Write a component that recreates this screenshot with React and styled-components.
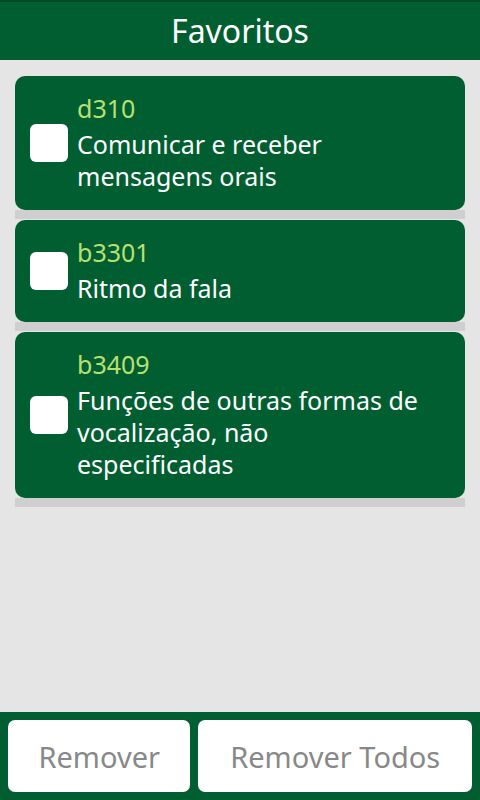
import styled, { createGlobalStyle } from "styled-components";

const GlobalStyle = createGlobalStyle`
  html, body {
    margin: 0;
    padding: 0;
    height: 100%;
    background: #e5e5e5;
    font-family: "Noto Sans", "Open Sans", sans-serif;
  }
  #root {
    height: 100%;
  }
  * {
    box-sizing: border-box;
  }
`;

const favorites = [
  { code: "d310", title: "Comunicar e receber mensagens orais" },
  { code: "b3301", title: "Ritmo da fala" },
  {
    code: "b3409",
    title: "Funções de outras formas de vocalização, não especificadas",
  },
];

export default function App() {
  return (
    <>
      <GlobalStyle />
      <Screen>
        <Header>Favoritos</Header>
        <List>
          {favorites.map((f) => (
            <Item key={f.code}>
              <Card>
                <Check />
                <Texts>
                  <Code>{f.code}</Code>
                  <Title>{f.title}</Title>
                </Texts>
              </Card>
              <Shadow />
            </Item>
          ))}
        </List>
        <Footer>
          <Button grow={2}>Remover</Button>
          <Button grow={3}>Remover Todos</Button>
        </Footer>
      </Screen>
    </>
  );
}

const Screen = styled.div`
  height: 800px;
  display: flex;
  flex-direction: column;
  background: #e5e5e5;
`;

const Header = styled.header`
  height: 60px;
  background: #005e30;
  border-top: 2px solid #004a25;
  color: #ffffff;
  font-size: 32px;
  display: flex;
  align-items: center;
  justify-content: center;
  padding-bottom: 2px;
`;

const List = styled.main`
  flex: 1;
  padding: 16px 15px 0;
  display: flex;
  flex-direction: column;
  gap: 1px;
`;

const Item = styled.div`
  display: flex;
  flex-direction: column;
`;

const Card = styled.div`
  background: #005e30;
  border-radius: 10px;
  padding: 17px 40px 18px 15px;
  display: flex;
  align-items: center;
  gap: 9px;
`;

const Shadow = styled.div`
  height: 9px;
  background: #cfcfcf;
`;

const Check = styled.div`
  width: 38px;
  height: 38px;
  flex-shrink: 0;
  background: #ffffff;
  border-radius: 6px;
`;

const Texts = styled.div`
  display: flex;
  flex-direction: column;
  font-size: 25px;
`;

const Code = styled.span`
  color: #b8e070;
  line-height: 30px;
  margin-bottom: 5px;
`;

const Title = styled.span`
  color: #ffffff;
  line-height: 32px;
`;

const Footer = styled.footer`
  height: 88px;
  background: #005e30;
  padding: 8px;
  display: flex;
  gap: 8px;
`;

const Button = styled.button`
  flex: ${({ grow }) => grow};
  border: none;
  border-radius: 7px;
  background: #ffffff;
  color: #888888;
  font-family: "Noto Sans", "Open Sans", sans-serif;
  font-size: 29px;
  padding: 0;
`;
